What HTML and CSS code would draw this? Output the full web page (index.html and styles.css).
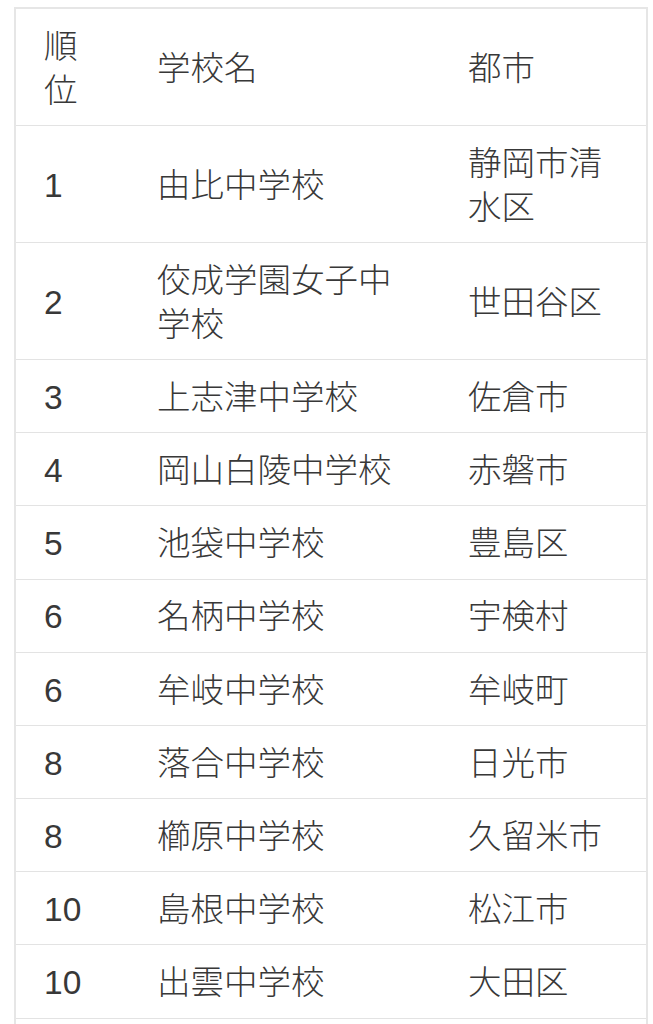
FILE: index.html
```html
<!DOCTYPE html>
<html lang="ja">
<head>
<meta charset="utf-8">
<link rel="stylesheet" href="styles.css">
</head>
<body>
<table class="rank">
  <colgroup>
    <col class="c1"><col class="c2"><col class="c3">
  </colgroup>
  <thead>
    <tr><th>順位</th><th>学校名</th><th>都市</th></tr>
  </thead>
  <tbody>
    <tr><td>1</td><td>由比中学校</td><td>静岡市清水区</td></tr>
    <tr><td>2</td><td>佼成学園女子中学校</td><td>世田谷区</td></tr>
    <tr><td>3</td><td>上志津中学校</td><td>佐倉市</td></tr>
    <tr><td>4</td><td>岡山白陵中学校</td><td>赤磐市</td></tr>
    <tr><td>5</td><td>池袋中学校</td><td>豊島区</td></tr>
    <tr><td>6</td><td>名柄中学校</td><td>宇検村</td></tr>
    <tr><td>6</td><td>牟岐中学校</td><td>牟岐町</td></tr>
    <tr><td>8</td><td>落合中学校</td><td>日光市</td></tr>
    <tr><td>8</td><td>櫛原中学校</td><td>久留米市</td></tr>
    <tr><td>10</td><td>島根中学校</td><td>松江市</td></tr>
    <tr><td>10</td><td>出雲中学校</td><td>大田区</td></tr>
    <tr><td>&nbsp;</td><td>&nbsp;</td><td>&nbsp;</td></tr>
  </tbody>
</table>
</body>
</html>
```
FILE: styles.css
```css
html, body {
  margin: 0;
  padding: 0;
  background: #ffffff;
}
body {
  padding: 7px 7px 0 14px;
  font-family: "Liberation Sans", "Noto Sans CJK JP", sans-serif;
  color: #383838;
}
.rank {
  width: 632px;
  border-collapse: collapse;
  table-layout: fixed;
  border: 2px solid #e6e6e6;
  font-size: 33.5px;
  line-height: 43.8px;
}
.c1 { width: 114px; }
.c2 { width: 311px; }
.c3 { width: 207px; }
.rank th,
.rank td {
  text-align: left;
  font-weight: 300;
  padding: 15.8px 28px 12.6px;
  border-bottom: 1px solid #e3e3e3;
  vertical-align: middle;
  word-break: break-all;
}
```
